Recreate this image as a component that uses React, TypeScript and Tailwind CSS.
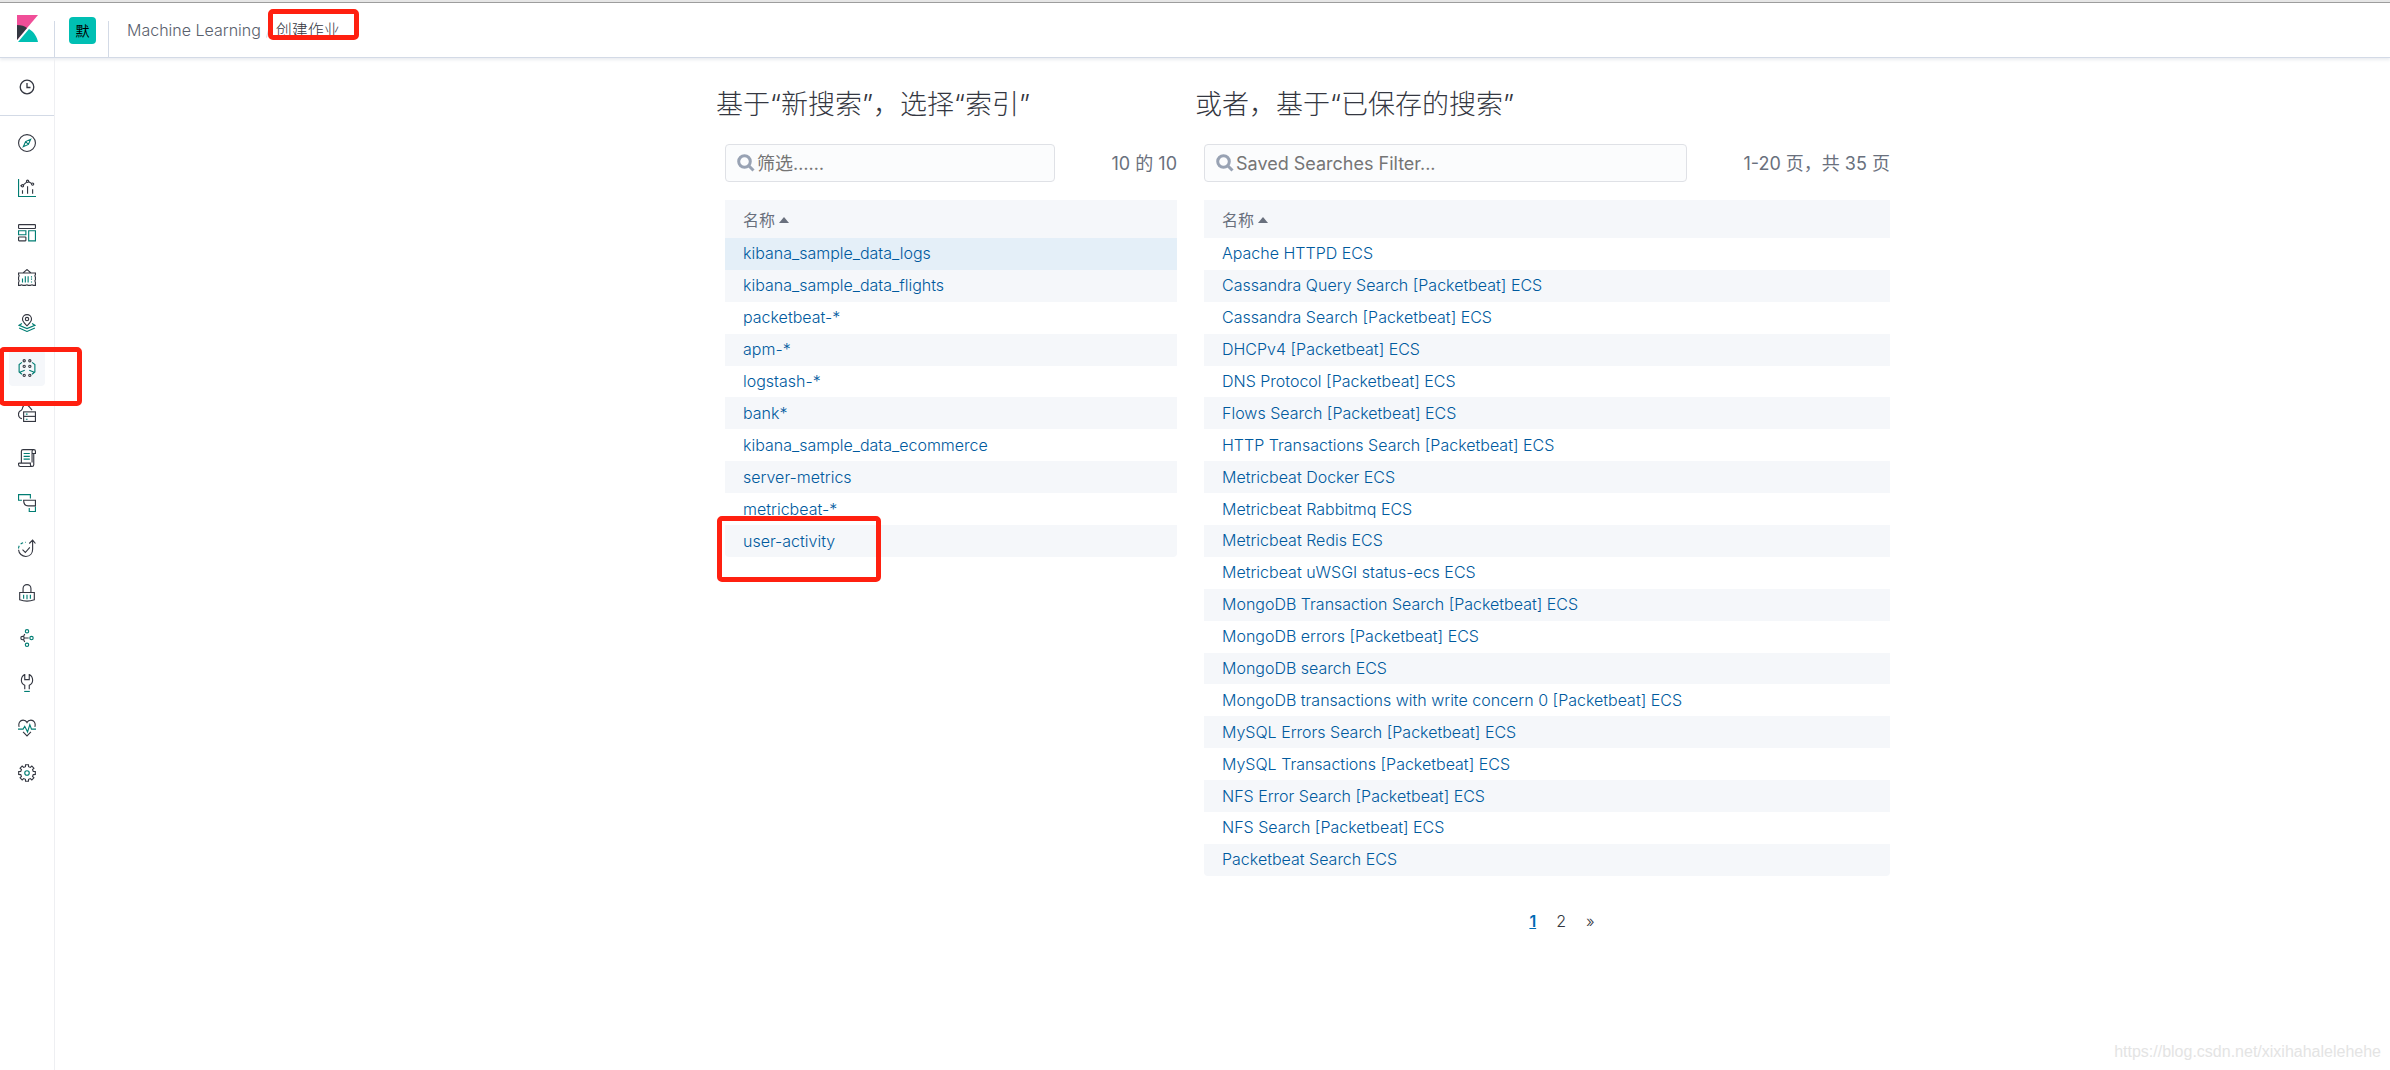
import React from "react";

const INK = "#343741";
const TEAL = "#017d73";

const indices = [
  "kibana_sample_data_logs",
  "kibana_sample_data_flights",
  "packetbeat-*",
  "apm-*",
  "logstash-*",
  "bank*",
  "kibana_sample_data_ecommerce",
  "server-metrics",
  "metricbeat-*",
  "user-activity",
];

const searches = [
  "Apache HTTPD ECS",
  "Cassandra Query Search [Packetbeat] ECS",
  "Cassandra Search [Packetbeat] ECS",
  "DHCPv4 [Packetbeat] ECS",
  "DNS Protocol [Packetbeat] ECS",
  "Flows Search [Packetbeat] ECS",
  "HTTP Transactions Search [Packetbeat] ECS",
  "Metricbeat Docker ECS",
  "Metricbeat Rabbitmq ECS",
  "Metricbeat Redis ECS",
  "Metricbeat uWSGI status-ecs ECS",
  "MongoDB Transaction Search [Packetbeat] ECS",
  "MongoDB errors [Packetbeat] ECS",
  "MongoDB search ECS",
  "MongoDB transactions with write concern 0 [Packetbeat] ECS",
  "MySQL Errors Search [Packetbeat] ECS",
  "MySQL Transactions [Packetbeat] ECS",
  "NFS Error Search [Packetbeat] ECS",
  "NFS Search [Packetbeat] ECS",
  "Packetbeat Search ECS",
];

// Outline of an eight-toothed gear centred in a 32-unit box.
const gearPath =
  "M" +
  Array.from({ length: 8 }, (_, k) =>
    [
      [11.5, -14],
      [15, -10],
      [15, 10],
      [11.5, 14],
    ]
      .map(([r, offset]) => {
        const a = ((k * 45 + offset) * Math.PI) / 180;
        return `${(16 + r * Math.cos(a)).toFixed(2)} ${(16 + r * Math.sin(a)).toFixed(2)}`;
      })
      .join("L"),
  ).join("L") +
  "z";

const apps: { label: string; art: React.ReactNode; active?: boolean }[] = [
  {
    label: "Discover",
    art: (
      <>
        <circle cx="16" cy="16" r="15" />
        <path stroke={TEAL} d="M22.500 9.500l-4 9-9 4 4-9zM13.500 13.500l5 5" />
      </>
    ),
  },
  {
    label: "Visualize",
    art: (
      <>
        <path stroke={TEAL} d="M1 0v31h31" />
        <path d="M8 20v6M17 13v13M26 18v8" />
        <circle cx="8" cy="12" r="2" />
        <circle cx="17" cy="4" r="2" />
        <circle cx="26" cy="9" r="2" />
        <path d="M9.500 10.500L15.500 5.500M19 5l5.200 3M6 12H4" />
      </>
    ),
  },
  {
    label: "Dashboard",
    art: (
      <>
        <rect x="1" y="1" width="30" height="7" rx="1" />
        <path stroke={TEAL} d="M1 12h13v7H1zM19 12h12v18H19z" />
        <rect x="1" y="23" width="13" height="7" rx="1" />
      </>
    ),
  },
  {
    label: "Canvas",
    art: (
      <>
        <path d="M1 7h30v3l-1 2 1 3v4l-1 2 1 3v5h-4l-2-1-3 1h-4l-2-1-3 1H9l-3-1-2 1H1v-5l1-3-1-2v-4l1-3-1-2zM9 7l7-6 7 6" />
        <path stroke={TEAL} d="M8 17v7M13 13v11M18 13v11M24 13v2M24 17v2M24 22v2" />
      </>
    ),
  },
  {
    label: "Maps",
    art: (
      <>
        <path d="M16 21c-4-4-8-7-8-12a8 8 0 0 1 16 0c0 5-4 8-8 12z" />
        <circle cx="16" cy="9" r="3" />
        <path stroke={TEAL} d="M7 17l-5 3 14 6 14-6-5-3M2 25l14 6 14-6" />
      </>
    ),
  },
  {
    label: "Machine Learning",
    active: true,
    art: (
      <>
        <circle cx="11" cy="3" r="2" />
        <circle cx="21" cy="3" r="2" />
        <circle cx="11" cy="13" r="2" />
        <circle cx="21" cy="13" r="2" />
        <circle cx="11" cy="29" r="2" />
        <circle cx="21" cy="29" r="2" />
        <path stroke={TEAL} d="M7 6L2 10v13l5 4M2 24l10-4M25 6l5 4v13l-5 4M30 24l-10-4" />
      </>
    ),
  },
  {
    label: "Infrastructure",
    art: (
      <>
        <path d="M7 26C-1 24-1 13 6 11c1-1 2-2 2-4 1-4 3-6 6-6s5 2 7 5l4 5" />
        <rect x="10" y="14" width="21" height="17" />
        <path d="M10 22h21" />
        <path stroke={TEAL} d="M14 18h3M14 27h3" />
      </>
    ),
  },
  {
    label: "Logs",
    art: (
      <>
        <path d="M6 24V4a3 3 0 0 1 3-3h19a3 3 0 0 1 3 3v4h-6M25 24V4a3 3 0 0 1 3-3M1 25h21v3a3 3 0 0 0 6 0V8M25 31H4a3 3 0 0 1-3-3v-3" />
        <path stroke={TEAL} d="M10 8h11M10 13h11M10 18h11" />
      </>
    ),
  },
  {
    label: "APM",
    art: (
      <>
        <path stroke={TEAL} d="M7 11H1V1h21v7M20 25v6h11V22" />
        <path d="M10 11h21v10H18c-5 0-8-4-8-10z" />
      </>
    ),
  },
  {
    label: "Uptime",
    art: (
      <>
        <path d="M1 19a13 13 0 0 0 13 12c7 0 12-5 12-13V2M20 8l6-6 5 6M8 19l5 5 8-9" />
        <path stroke={TEAL} strokeDasharray="5 4" d="M1 17C1 11 6 6 14 6" />
      </>
    ),
  },
  {
    label: "SIEM",
    art: (
      <>
        <path d="M9 14V8a7 7 0 0 1 14 0v6M3 15h26v13c-8 3-18 3-26 0z" />
        <path stroke={TEAL} d="M10 19v7M16 19v8M22 19v7" />
      </>
    ),
  },
  {
    label: "Graph",
    art: (
      <>
        <circle cx="8" cy="16" r="3" />
        <path d="M11 16h8M10 13l2-4M10 19l2 4" />
        <g stroke={TEAL}>
          <circle cx="16" cy="4" r="3" />
          <circle cx="24" cy="16" r="3" />
          <circle cx="16" cy="28" r="3" />
        </g>
      </>
    ),
  },
  {
    label: "Dev Tools",
    art: (
      <>
        <path d="M12 27v-7c-4-2-6-5-6-9 0-5 2-8 6-10v9h8V1c4 2 6 5 6 10 0 4-2 7-6 9v7" />
        <path stroke={TEAL} d="M11 31h10" />
      </>
    ),
  },
  {
    label: "Monitoring",
    art: (
      <>
        <path d="M2 14C0 7 4 2 9 2c3 0 6 2 7 4 1-2 4-4 7-4 5 0 9 5 7 12M9 23l7 7 7-7" />
        <path stroke={TEAL} d="M0 18h9l3-5 5 10 4-13 3 8h8" />
      </>
    ),
  },
  {
    label: "Management",
    art: (
      <>
        <path d={gearPath} />
        <circle cx="16" cy="16" r="4" stroke={TEAL} />
      </>
    ),
  },
];

function Mark({ className }: { className: string }) {
  return (
    <span
      aria-hidden="true"
      className={"pointer-events-none absolute z-10 rounded-[5px] border-[5px] border-[#ff2010] " + className}
    />
  );
}

function KibanaLogo() {
  return (
    <svg width="21" height="27" viewBox="0 0 21 27" aria-hidden="true">
      <path fill="#f04e98" d="M0 0h21L0 25z" />
      <path fill="#343741" d="M0 10c4 0 8 1 10 3L0 25z" />
      <path fill="#00bfb3" d="M12 14c5 3 8 8 9 13H1z" />
    </svg>
  );
}

function SearchField({ label, placeholder, className }: { label: string; placeholder: string; className: string }) {
  return (
    <label className={"flex h-[38px] items-center rounded-[4px] border border-[#dfe1e6] bg-[#fbfcfd] pl-[11px] " + className}>
      <svg width="18" height="18" viewBox="0 0 18 18" fill="none" stroke="#98a2b3" strokeWidth="3" aria-hidden="true">
        <circle cx="7.500" cy="7.500" r="5.800" />
        <path d="M11.500 11.500l5 5" />
      </svg>
      <input
        type="text"
        aria-label={label}
        placeholder={placeholder}
        className="ml-[2px] min-w-0 flex-1 bg-transparent text-[18px] font-normal text-[#343741] outline-none placeholder:text-[#757575]"
      />
    </label>
  );
}

function ItemTable({ items, highlighted, marked, className }: { items: string[]; highlighted?: string; marked?: string; className: string }) {
  return (
    <table className={"mt-[18px] w-full border-separate border-spacing-0 text-left text-[16px] leading-[22px] " + className}>
      <thead>
        <tr className="h-[38px]">
          <th scope="col" className="bg-[#f5f7fa] px-[18px] font-normal text-[#69707d]">
            <button type="button" className="flex items-center gap-1 pt-[2px]">
              名称
              <svg width="10" height="6" viewBox="0 0 10 6" aria-hidden="true">
                <path fill="#69707d" d="M5 0l5 6H0z" />
              </svg>
            </button>
          </th>
        </tr>
      </thead>
      <tbody>
        {items.map((item, i) => (
          <tr key={item}>
            <td
              className={
                "relative px-[18px] pt-1 pb-[5px] " +
                (item === highlighted ? "bg-[#e4eff8] " : i % 2 ? "bg-[#f5f7fa] " : "") +
                (i === items.length - 1 ? "rounded-b-[4px]" : "")
              }
            >
              <a href="#" className="text-[#005a9e]">
                {item}
              </a>
              {item === marked && <Mark className="-top-[9px] -left-2 h-[66px] w-[164px]" />}
            </td>
          </tr>
        ))}
      </tbody>
    </table>
  );
}

export default function App() {
  return (
    <div className="relative flex min-h-screen flex-col bg-white font-['Inter','Noto_Sans_CJK_SC',sans-serif] text-[16px] font-light text-[#343741]">
      <div className="h-[3px] border-b border-[#9e9e9e] bg-[#e6e6e6]" />
      <header className="flex h-[55px] border-b border-[#d3dae6] shadow-[0_2px_3px_rgba(150,160,180,0.2)]">
        <a href="#" aria-label="Kibana" className="flex w-[54px] items-start pt-3 pl-[17px]">
          <KibanaLogo />
        </a>
        <div className="mt-[18px] w-px bg-[#d3dae6]" />
        <div className="flex w-[53px] pt-[14px] pl-[14px]">
          <button type="button" className="size-[27px] rounded-[4px] bg-[#00bfb3] text-[14px] leading-[26px] font-normal text-black">
            默
          </button>
        </div>
        <div className="mt-[18px] w-px bg-[#d3dae6]" />
        <nav aria-label="Breadcrumbs" className="flex h-[54px] items-center pl-[18px]">
          <a href="#" className="text-[#5a616d]">
            Machine Learning
          </a>
          <span aria-hidden="true" className="mx-[7px] h-4 w-px rotate-[15deg] bg-[#d3dae6]" />
          <span className="relative">
            创建作业
            <Mark className="-top-[9px] -left-2 h-[31px] w-[91px]" />
          </span>
        </nav>
      </header>

      <div className="flex flex-1">
        <aside className="w-[55px] border-r border-[#eeeff2]">
          <div className="flex h-[58px] items-center justify-center border-b border-[#d3dae6]">
            <button type="button" aria-label="Recently viewed">
              <svg width="16" height="16" viewBox="0 0 16 16" fill="none" stroke={INK} strokeWidth="1.300" aria-hidden="true">
                <circle cx="8" cy="8" r="6.800" />
                <path d="M8 4v4.500h3.500" />
              </svg>
            </button>
          </div>
          <nav aria-label="Applications" className="flex flex-col items-center gap-[9px] pt-[9px]">
            {apps.map((app) => (
              <a
                key={app.label}
                href="#"
                aria-label={app.label}
                className={"relative flex size-9 items-center justify-center rounded-[4px] " + (app.active ? "bg-[#f5f7fa]" : "")}
              >
                <svg width="18" height="18" viewBox="0 0 32 32" fill="none" stroke={INK} strokeWidth="2" aria-hidden="true">
                  {app.art}
                </svg>
                {app.active && <Mark className="-top-[3px] -left-[10px] h-[59px] w-[83px]" />}
              </a>
            ))}
          </nav>
        </aside>

        <main className="grid flex-1 grid-cols-[661fr_470fr_704fr_500fr] items-start pt-[23px]">
          <section className="col-start-2 pr-[9px]">
            <h2 className="pt-[2px] text-[27px] leading-[44px] whitespace-nowrap">基于“新搜索”，选择“索引”</h2>
            <div className="pt-[17px] pl-[9px]">
              <div className="flex items-center justify-between">
                <SearchField label="筛选索引" placeholder="筛选……" className="w-[73%]" />
                <span className="text-[18px] font-normal text-[#69707d]">10 的 10</span>
              </div>
              <ItemTable items={indices} highlighted="kibana_sample_data_logs" marked="user-activity" className="h-[357px]" />
            </div>
          </section>

          <section className="col-start-3 pl-[9px]">
            <h2 className="pt-[2px] text-[27px] leading-[44px] whitespace-nowrap">或者，基于“已保存的搜索”</h2>
            <div className="pt-[17px] pl-[9px]">
              <div className="flex items-center justify-between">
                <SearchField label="筛选已保存的搜索" placeholder="Saved Searches Filter..." className="w-[483px]" />
                <span className="text-[18px] font-normal text-[#69707d]">1-20 页，共 35 页</span>
              </div>
              <ItemTable items={searches} className="h-[676px]" />
              <nav aria-label="Pagination" className="mt-[33px] flex justify-center gap-[20px] pl-[30px]">
                <a href="#" aria-current="page" className="font-semibold text-[#006bb4] underline">
                  1
                </a>
                <a href="#">2</a>
                <a href="#">»</a>
              </nav>
            </div>
          </section>
        </main>
      </div>

      <div className="pointer-events-none absolute right-[9px] bottom-[6px] font-['Liberation_Sans',sans-serif] text-[16px] font-normal text-[#e4e4e4]">
        https://blog.csdn.net/xixihahalelehehe
      </div>
    </div>
  );
}
